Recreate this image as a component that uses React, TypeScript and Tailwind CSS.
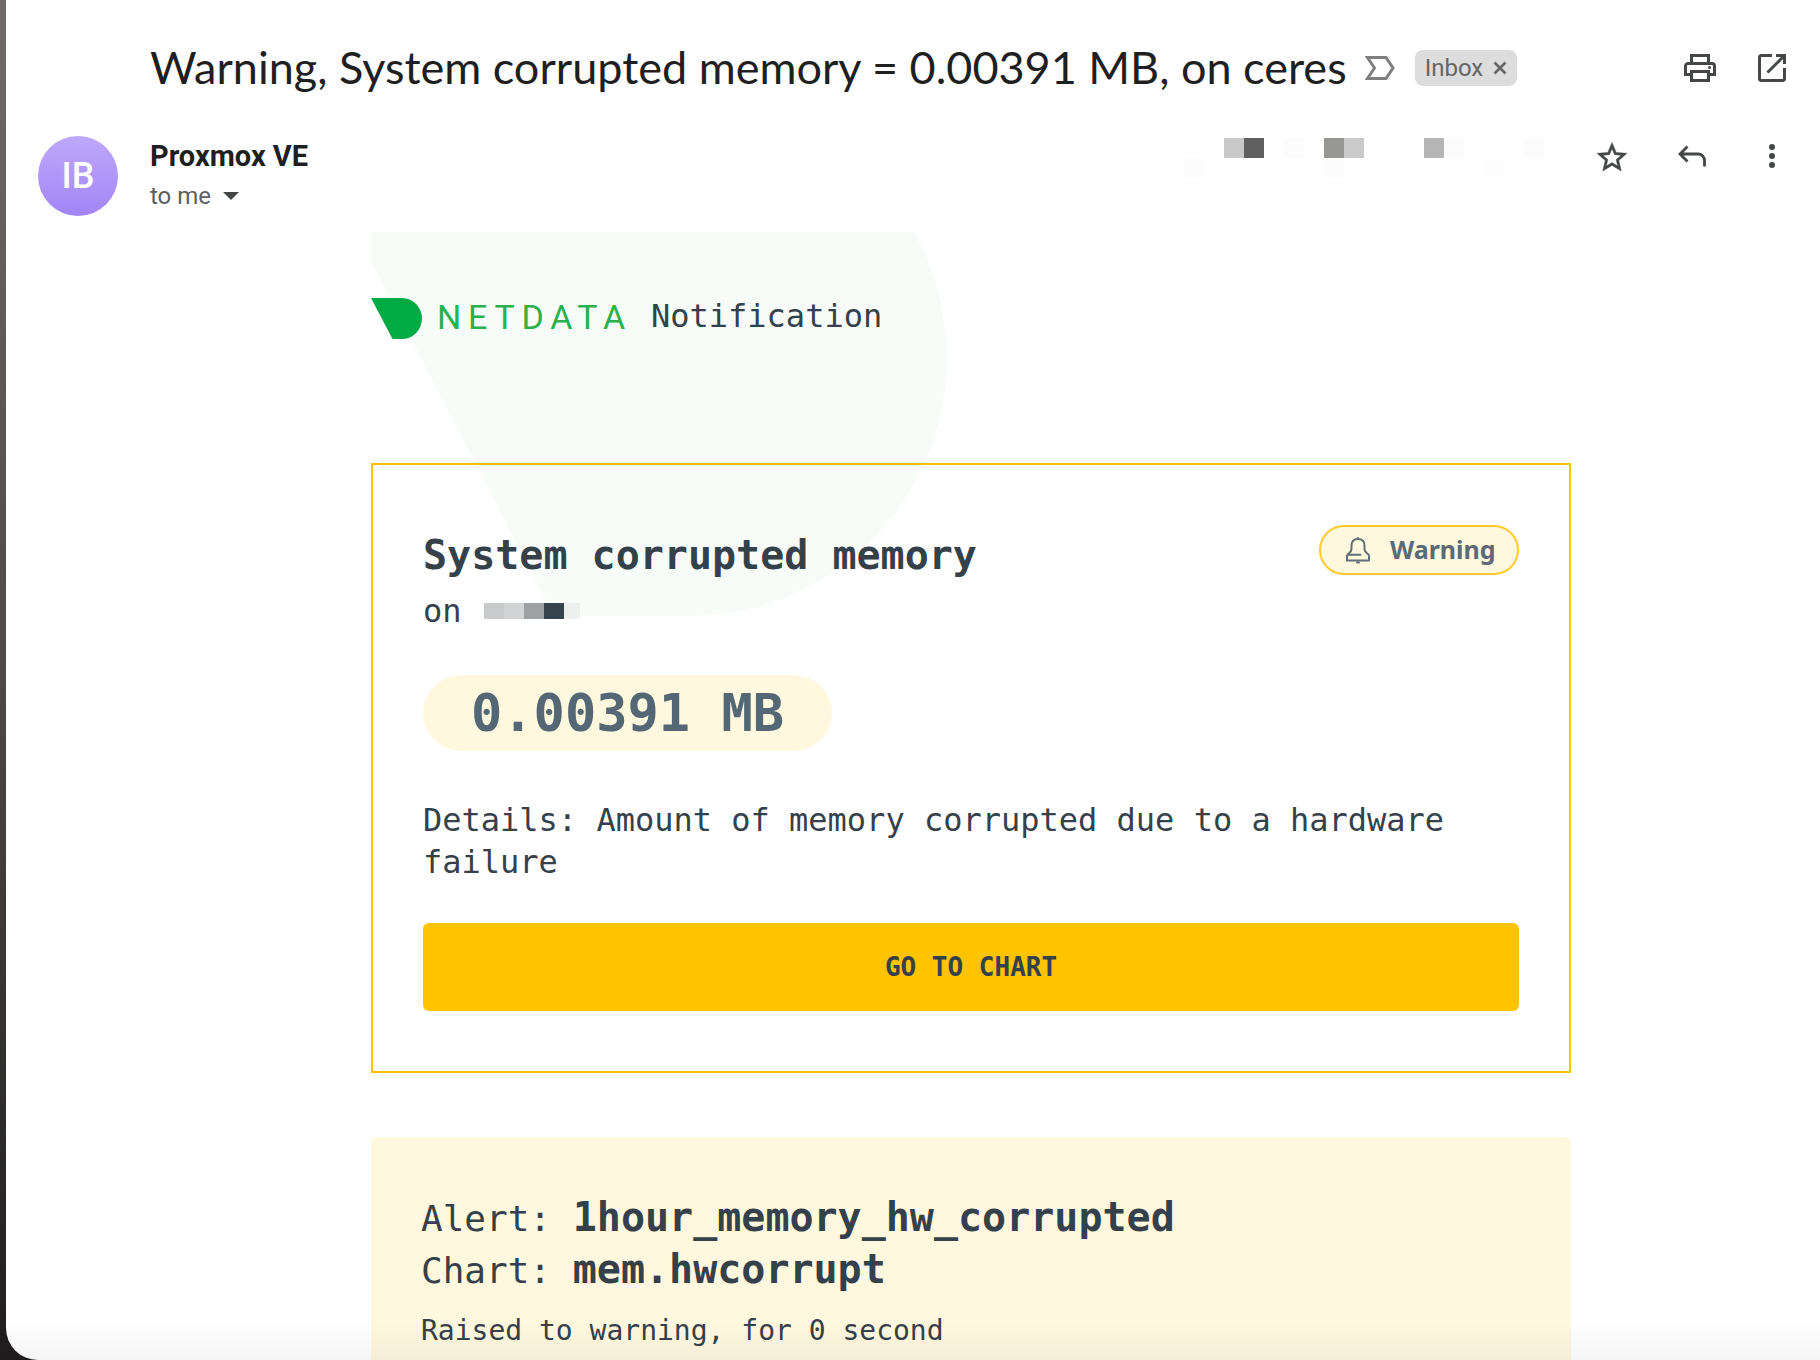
import React from "react";

const sans = "font-['Lato','Liberation_Sans',sans-serif]";
const roboto = "font-['Roboto','Liberation_Sans',sans-serif]";
const mono = "font-['DejaVu_Sans_Mono','Liberation_Mono',monospace]";

const dateBlocks = [
  "", "", "bg-[#c9c9c9]", "bg-[#606060]", "", "bg-[#fcfcfc]", "", "bg-[#979794]", "bg-[#cacaca]",
  "", "", "", "bg-[#b5b5b5]", "bg-[#fbfbfb]", "", "", "", "bg-[#fbfbfb]",
  "bg-[#fcfcfc]", "", "", "", "", "", "", "bg-[#fcfcfc]", "",
  "", "", "", "", "", "", "bg-[#fdfdfd]", "", "",
];

const hostBlocks = ["bg-[#c9cacc]", "bg-[#d2d3d5]", "bg-[#9da1a4]", "bg-[#36434d]"];

function IconButton({ label, children }: { label: string; children: React.ReactNode }) {
  return (
    <button type="button" aria-label={label} className="flex size-8 items-center justify-center text-[#444746]">
      {children}
    </button>
  );
}

function PrintIcon() {
  return (
    <svg viewBox="0 0 32 28" className="h-7 w-8 shrink-0" fill="none" stroke="currentColor" strokeWidth="3">
      <path d="M7.5 9V1.5h17V9" />
      <path d="M7 20.5H1.500V12a2.500 2.500 0 0 1 2.500-2.500h24a2.500 2.500 0 0 1 2.500 2.500v8.500H25" />
      <path d="M7.500 17.500h17v9h-17z" />
      <circle cx="25.500" cy="13.500" r="1.500" fill="currentColor" stroke="none" />
    </svg>
  );
}

function OpenIcon() {
  return (
    <svg viewBox="0 0 28 28" className="size-7 shrink-0" fill="none" stroke="currentColor" strokeWidth="3">
      <path d="M14 1.500H3A1.500 1.500 0 0 0 1.500 3v22A1.500 1.500 0 0 0 3 26.500h22a1.500 1.500 0 0 0 1.500-1.500V14" />
      <path d="M18 1.500h8.500V10M26 2 9.500 18.500" />
    </svg>
  );
}

function StarIcon() {
  return (
    <svg viewBox="0 -1 24 24" className="size-9 shrink-0" fill="currentColor">
      <path stroke="currentColor" strokeWidth=".3" d="M22 9.240l-7.190-.620L12 2 9.190 8.630 2 9.240l5.460 4.730L5.820 21 12 17.270 18.180 21l-1.630-7.030L22 9.240zM12 15.400l-3.760 2.270 1-4.280-3.320-2.880 4.380-.380L12 6.100l1.710 4.040 4.380.380-3.320 2.880 1 4.280L12 15.400z" />
    </svg>
  );
}

function ReplyIcon() {
  return (
    <svg viewBox="0 0 28 22" className="h-[22px] w-7 shrink-0" fill="none" stroke="currentColor" strokeWidth="2.800">
      <path d="M9.500 1.500 2 9l7.500 7.500M2.500 9H20a6.500 6.500 0 0 1 6.500 6.500V21.500" />
    </svg>
  );
}

function MoreIcon() {
  return (
    <svg viewBox="0 0 6 24" className="h-6 w-1.5 shrink-0" fill="currentColor">
      <circle cx="3" cy="3" r="3" />
      <circle cx="3" cy="12" r="3" />
      <circle cx="3" cy="21" r="3" />
    </svg>
  );
}

function BellIcon() {
  return (
    <svg viewBox="0 0 24 28" className="h-7 w-6" fill="none" stroke="#5f707b" strokeWidth="2" strokeLinejoin="round" strokeLinecap="round">
      <path d="M12 3C8 3 5.500 5.500 5.500 9.500v3.500c0 2-.800 3-2.500 4.200-1.300 1-2 1.600-2 2.800v4.500h22V20c0-1.200-.700-1.800-2-2.800-1.700-1.200-2.500-2.200-2.500-4.200V9.500C18.500 5.500 16 3 12 3z" />
      <path d="M2 18.800h12.500M12 2v.500M11 26.500h2" />
    </svg>
  );
}

export default function App() {
  return (
    <div className="flex min-h-screen bg-linear-to-b from-[#6f6b69] via-[#4d4947] to-[#1f1c1e] pl-1.5">
      <main className="relative flex min-w-0 flex-1 flex-col overflow-hidden rounded-bl-[32px] bg-white">
        <header className="flex items-center pt-9 pr-8 pl-36">
          <h1 className={`${sans} pb-0.5 text-[45px] leading-[62px] whitespace-nowrap text-[#1f1f1f]`}>
            Warning, System corrupted memory = 0.00391 MB, on ceres
          </h1>
          <button type="button" aria-label="Mark as important" className="ml-[18px] shrink-0">
            <svg viewBox="0 0 30 24" className="h-6 w-[30px]" fill="none" stroke="#7f7f7f" strokeWidth="3">
              <path d="M2.500 1.500h18.500L28 12l-7 10.500H2.500L9.500 12z" />
            </svg>
          </button>
          <span className={`${roboto} ml-5 flex h-9 shrink-0 items-center gap-2.5 rounded-lg bg-[#dddddd] px-2.5 text-2xl text-[#666666]`}>
            Inbox
            <button type="button" aria-label="Remove label Inbox">
              <svg viewBox="0 0 14 14" className="size-3.5" stroke="#666666" strokeWidth="2.600">
                <path d="M1.500 1.500l11 11M12.500 1.500l-11 11" />
              </svg>
            </button>
          </span>
          <div className="ml-auto flex shrink-0 gap-10">
            <IconButton label="Print"><PrintIcon /></IconButton>
            <IconButton label="Open in new window"><OpenIcon /></IconButton>
          </div>
        </header>

        <section className="mt-9 flex items-start pr-8 pl-8">
          <div className={`${roboto} flex size-20 items-center justify-center rounded-full bg-linear-to-b from-[#bea8fa] to-[#a385f7] text-4xl font-medium text-white`}>
            IB
          </div>
          <div className={`${roboto} ml-8`}>
            <p className="text-[29px] leading-10 font-bold text-[#1f1f1f]">Proxmox VE</p>
            <button type="button" className="flex items-center gap-3 text-2xl leading-10 text-[#5e5e5e]">
              to me
              <svg viewBox="0 0 16 8" className="h-2 w-4" fill="#444746"><path d="M0 0h16L8 8z" /></svg>
            </button>
          </div>
          <div className="mt-0.5 ml-auto grid grid-cols-[repeat(18,20px)]" aria-hidden="true">
            {dateBlocks.map((tone, i) => <span key={i} className={`h-5 ${tone}`} />)}
          </div>
          <div className="mt-1 ml-[52px] flex gap-12">
            <IconButton label="Star"><StarIcon /></IconButton>
            <IconButton label="Reply"><ReplyIcon /></IconButton>
            <IconButton label="More"><MoreIcon /></IconButton>
          </div>
        </section>

        <div className="mt-4 flex flex-1 flex-col pr-7 pl-36">
          <article className={`${mono} relative mx-auto flex w-full max-w-[1200px] flex-1 flex-col text-[#35414a]`}>
            <svg viewBox="0 0 576 384" className="absolute top-0 left-0 h-96 w-[576px]" fill="#f7fcf9" aria-hidden="true">
              <path d="M0 0h543A258 258 0 0 1 318 384H183L0 29z" />
            </svg>

            <div className="relative flex h-[172px] items-center">
              <svg viewBox="0 0 51 41" className="h-[41px] w-[51px]" fill="#00ab44" aria-hidden="true">
                <path d="M0 0h31a20 20.500 0 0 1 0 41H22.500a1.500 1.500 0 0 1-1.500-1z" />
              </svg>
              <span className="ml-[15px] w-[198px] pb-0.5 font-['Roboto','Liberation_Sans',sans-serif] text-[34px] leading-10 tracking-[0.2em] text-[#2bb04e]">NETDATA</span>
              <span className="ml-4 pb-1 text-[32px] leading-10">Notification</span>
            </div>

            <section className="relative mt-[59px] border-2 border-[#ffc300] px-[50px] py-[60px]">
              <div className="flex items-start justify-between">
                <div>
                  <h2 className="text-[40px] leading-[60px] font-bold">System corrupted memory</h2>
                  <p className="flex items-center text-[32px] leading-[52px]">
                    on
                    <span className="ml-[22px] flex h-4" aria-hidden="true">
                      {hostBlocks.map((tone) => <span key={tone} className={`w-5 ${tone}`} />)}
                      <span className="w-4 bg-[#ecf0ee]" />
                    </span>
                  </p>
                </div>
                <span className="flex h-[50px] w-[200px] items-center rounded-full border-2 border-[#ffcb2b] bg-[#fff7de] pl-[25px] font-['Noto_Sans',sans-serif] text-[25px] leading-9 font-bold text-[#5a6b77]">
                  <BellIcon />
                  <span className="ml-5 pb-0.5">Warning</span>
                </span>
              </div>
              <p className="mt-[38px] w-fit rounded-full bg-[#fff7de] px-12 text-[52px] leading-[76px] font-bold text-[#536775]">
                0.00391 MB
              </p>
              <p className="mt-12 text-[32px] leading-[42px]">
                Details: Amount of memory corrupted due to a hardware failure
              </p>
              <a href="#chart" className="mt-10 block rounded-md bg-[#ffc300] text-center text-[26px] leading-[88px] font-bold">
                GO TO CHART
              </a>
            </section>

            <section className="relative mt-16 flex-1 rounded-t-md bg-[#fff7de] px-[50px] pt-14">
              <p className="text-4xl leading-[52px]">
                Alert: <strong className="text-[40px] leading-10">1hour_memory_hw_corrupted</strong>
              </p>
              <p className="text-4xl leading-[52px]">
                Chart: <strong className="text-[40px] leading-10">mem.hwcorrupt</strong>
              </p>
              <p className="mt-2 text-[28px] leading-[52px]">Raised to warning, for 0 second</p>
            </section>
          </article>
        </div>
        <div className="pointer-events-none absolute inset-x-0 bottom-0 h-10 bg-linear-to-b from-transparent to-black/4" />
      </main>
    </div>
  );
}
